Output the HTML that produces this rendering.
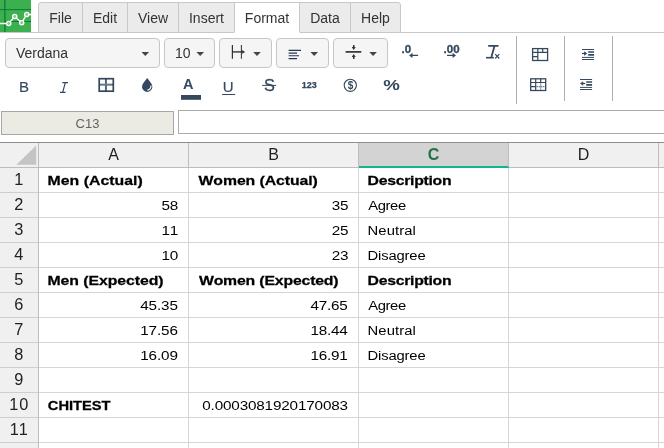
<!DOCTYPE html>
<html>
<head>
<meta charset="utf-8">
<title>Spreadsheet</title>
<style>
*{box-sizing:border-box;margin:0;padding:0}
html,body{width:664px;height:448px;overflow:hidden;background:#fff}
body{font-family:"Liberation Sans",sans-serif;color:#333;position:relative}
#app{position:absolute;left:0;top:0;width:664px;height:448px;overflow:hidden;will-change:transform}
/* tab bar */
#tabline{position:absolute;left:0;top:32px;width:664px;height:1px;background:#c8c8c8}
.tab{position:absolute;top:2px;height:31px;background:#ebebeb;border:1px solid #c8c8c8;font-size:14px;line-height:30px;text-align:center;color:#333;white-space:nowrap}
.tab.first{border-top-left-radius:3px}
.tab.last{border-top-right-radius:3px}
.tab.active{background:#fff;border-bottom-color:#fff;height:31px}
/* dropdowns */
.dd{position:absolute;top:38px;height:30px;background:#f5f5f5;border:1px solid #c6c6c6;border-radius:4px}
.ddtxt{position:absolute;top:0;line-height:29px;font-size:14px;color:#333}
svg{position:absolute;overflow:visible}
.sep{position:absolute;width:1px;background:#a9b1b9}
/* formula bar */
#namebox{position:absolute;left:1px;top:111px;width:173px;height:24px;background:#ebebe3;border:1px solid #a6a6a6;font-size:13px;line-height:23px;text-align:center;color:#636363}
#formula{position:absolute;left:178px;top:110px;width:500px;height:24px;background:#fff;border:1px solid #ababab}
/* grid */
#grid{position:absolute;left:0;top:142px;width:664px;height:306px;border-top:1px solid #8e8e8e;background:#fff}
.ch{position:absolute;top:0;height:25px;background:#f0f0f0;border-right:1px solid #bdbdbd;border-bottom:1px solid #bdbdbd;font-size:16px;line-height:23px;text-align:center;color:#222}
.ch.sel{background:#d3d3d3;border-bottom:2px solid #14b48f;color:#217346;font-weight:bold}
.rh{position:absolute;left:0;width:39px;height:25px;background:#f0f0f0;border-right:1px solid #bdbdbd;border-bottom:1px solid #cfcfcf;font-size:16.3px;letter-spacing:1px;padding-left:.6px;line-height:24px;text-align:center;color:#222}
.rh span{display:inline-block;position:relative;top:-1px}
.vl{position:absolute;top:25px;width:1px;height:290px;background:#d6d6d6}
.hl{position:absolute;left:39px;width:625px;height:1px;background:#d6d6d6}
.c{position:absolute;height:24px;line-height:24px;color:#000;white-space:nowrap;font-kerning:none;transform-origin:0 50%}
.c.b{font-weight:bold;font-size:15.8px;-webkit-text-stroke:.3px #000;transform:translateY(-.25px) scaleY(.846)}
.c.r{font-size:15.25px;transform:translateY(-.35px) scaleY(.875);margin-top:-.25px}
.c.l{font-size:14.8px;transform:translateY(-.5px) scaleY(.90)}
</style>
</head>
<body>
<div id="app">

<!-- logo -->
<svg style="left:0;top:0" width="31" height="32" viewBox="0 0 31 32">
  <rect x="0" y="0" width="31" height="32" fill="#3cb04f"/>
  <rect x="4.2" y="0" width="1.3" height="32" fill="#0e7a38"/>
  <rect x="0" y="9.1" width="31" height="1" fill="#0e7a38"/>
  <rect x="5" y="21" width="26" height="1" fill="#0e7a38"/>
  <polyline points="0,23.5 8.7,23.5 14.7,16.5 21.7,22.7 26.7,14.5 31,14.5" fill="none" stroke="#fff" stroke-width="1.3"/>
  <circle cx="8.7" cy="23.5" r="2.1" fill="#7fcb8b" stroke="#fff" stroke-width="1.3"/>
  <circle cx="14.7" cy="16.5" r="2.1" fill="#7fcb8b" stroke="#fff" stroke-width="1.3"/>
  <circle cx="21.7" cy="22.7" r="2.1" fill="#7fcb8b" stroke="#fff" stroke-width="1.3"/>
  <circle cx="26.7" cy="14.5" r="2.1" fill="#7fcb8b" stroke="#fff" stroke-width="1.3"/>
</svg>

<!-- tabs -->
<div id="tabline"></div>
<div class="tab first" style="left:38px;width:45px">File</div>
<div class="tab" style="left:82px;width:46px">Edit</div>
<div class="tab" style="left:127px;width:52px">View</div>
<div class="tab" style="left:178px;width:57px">Insert</div>
<div class="tab" style="left:299px;width:52px">Data</div>
<div class="tab last" style="left:350px;width:51px">Help</div>
<div class="tab active" style="left:234px;width:66px">Format</div>

<!-- toolbar row 1 -->
<div class="dd" style="left:5px;width:155px"><span class="ddtxt" style="left:10px">Verdana</span></div>
<div class="dd" style="left:164px;width:51px"><span class="ddtxt" style="left:10px">10</span></div>
<div class="dd" style="left:219px;width:53px"></div>
<div class="dd" style="left:276px;width:53px"></div>
<div class="dd" style="left:333px;width:55px"></div>

<!-- separators -->
<div class="sep" style="left:516px;top:36px;height:68px"></div>
<div class="sep" style="left:564px;top:36px;height:65px"></div>
<div class="sep" style="left:612px;top:36px;height:65px"></div>


<!-- toolbar icons (page coordinates) -->
<svg id="icons" style="left:0;top:0" width="664" height="448" viewBox="0 0 664 448">
  <g fill="none" stroke="#333" stroke-width="1.25">
    <!-- column width icon -->
    <path d="M232.4 45v13.8"/><path d="M241.4 45v13.8" stroke-width="1.05"/>
    <path d="M232.4 51.9h10.4" stroke-width="1.4"/>
    <path d="M242.2 50.1l2.9 1.8l-2.9 1.8z" fill="#333" stroke="none"/>
    <!-- vertical middle icon -->
    <path d="M345.6 51.9h15.7" stroke-width="1.7"/>
    <path d="M353.7 45v3.2M353.7 59v-3.2" stroke-width="1.5"/>
    <path d="M351.7 47.1h4l-2 2.9zM351.7 56.9h4l-2-2.9z" fill="#333" stroke="none"/>
  </g>
  <g fill="none" stroke="#253951" stroke-width="1.1">
    <!-- align left icon -->
    <path d="M288.6 50.4h12.4M288.6 53.1h8.4M288.6 55.8h10.4M288.6 58.6h8.4"/>
  </g>
  <g fill="#34495e" stroke="#34495e" stroke-width="0" font-family="Liberation Sans, sans-serif">
    <!-- decimals -->
    <text x="401.6" y="53" font-size="11.5" font-weight="bold" stroke-width="0.35">.0</text>
    <path d="M418.1 54.7h-5.6v-1.9l-3.4 2.6l3.4 2.6v-1.9h5.6z"/>
    <text x="443.6" y="53" font-size="11.5" font-weight="bold" stroke-width="0.35">.00</text>
    <path d="M447 54.7h5.6v-1.9l3.4 2.6l-3.4 2.6v-1.9h-5.6z"/>
    <!-- clear format -->
    <path d="M488.2 45.9h10.3M494.5 45.9l-3.1 11.1" stroke-width="1.8" fill="none"/>
    <rect x="486" y="56.9" width="7.8" height="1.6"/>
    <path d="M495.2 54.2l4.1 4.3M499.3 54.2l-4.1 4.3" stroke-width="1.2" fill="none"/>
    <!-- row 2 -->
    <text x="19" y="92.4" font-size="15" stroke-width="0.15">B</text>
    <path d="M62.4 82.6h5.6M60 92.4h5.6M65.3 82.6l-2.6 9.8" stroke-width="1.2" fill="none"/>
    <text x="182.9" y="89.1" font-size="14" font-weight="bold" textLength="10.5" lengthAdjust="spacingAndGlyphs">A</text>
    <rect x="181" y="95" width="20" height="4.8"/>
    <text x="222.8" y="92.3" font-size="15" stroke-width="0.15">U</text>
    <rect x="222.1" y="94" width="13" height="1"/>
    <text x="263.9" y="90.5" font-size="16.3" stroke-width="0.3">S</text>
    <rect x="262.1" y="84.9" width="14" height="1"/>
    <text x="301.7" y="88.1" font-size="9" font-weight="bold" stroke-width="0.25">123</text>
    <text x="383.2" y="90" font-size="14.5" font-weight="bold" textLength="16.6" lengthAdjust="spacingAndGlyphs">%</text>
    <text x="347.7" y="88.8" font-size="10" font-weight="bold">$</text>
  </g>
  <g fill="none" stroke="#34495e">
    <!-- currency circle -->
    <circle cx="350.3" cy="85.3" r="6.1" stroke-width="1.1"/>
    <!-- borders icon -->
    <rect x="99.2" y="78.7" width="14.1" height="12.5" stroke-width="1.7"/>
    <path d="M105.9 78.7v12.5M99.2 84.6h14.1" stroke-width="1.9"/>
    <path d="M105.9 80v10M100.4 84.6h11.6" stroke="#93a0ad" stroke-width="0.6"/>
    <!-- table icon 1 -->
    <rect x="532.6" y="48.6" width="15" height="11.9" stroke-width="1.3"/>
    <path d="M537.8 48.6v11.9M532.6 52.3h15M532.6 56.6h5.2M542.7 48.6v3.7" stroke-width="1.2"/>
    <!-- table icon 2 -->
    <rect x="530.7" y="78.8" width="15" height="11.7" stroke-width="1.3"/>
    <path d="M535.7 78.8v11.7M530.7 82.5h15M530.7 86.6h5M540.7 78.8v3.7" stroke-width="1.2"/>
    <path d="M540.7 83.5v7M536.7 86.6h9" stroke-width="1.1" stroke-dasharray="1 1"/>
    <!-- indent icons -->
    <path d="M582 49.5h12.1M582 57.4h12.1M582 59.5h12.1" stroke-width="1"/>
    <path d="M588.2 52h5.9M588.2 54.9h5.9" stroke-width="1.7"/>
    <path d="M582 53.5h3" stroke-width="1.2"/>
    <path d="M584.1 51.3l3.2 2.2l-3.2 2.2z" fill="#34495e" stroke="none"/>
    <path d="M580 79.5h12.1M580 87.4h12.1M580 89.5h12.1" stroke-width="1"/>
    <path d="M586.2 82h5.9M586.2 84.9h5.9" stroke-width="1.7"/>
    <path d="M582.5 83.5h2.8" stroke-width="1.2"/>
    <path d="M583.2 81.3l-3.2 2.2l3.2 2.2z" fill="#34495e" stroke="none"/>
  </g>
  <g fill="#444"><path d="M141.5 52h7.6l-3.8 4.1z"/><path d="M196.4 52h7.6l-3.8 4.1z"/><path d="M253.2 52h7.6l-3.8 4.1z"/><path d="M310.4 52h7.6l-3.8 4.1z"/><path d="M369.3 52h7.6l-3.8 4.1z"/></g>
  <!-- fill drop -->
  <path d="M147.2 78c2.2 2.9 5.2 6 5.2 8.7a5.2 5.2 0 0 1-10.4 0c0-2.7 3-5.8 5.2-8.7z" fill="#34495e"/>
  <path d="M150.8 85.5a3.7 3.7 0 0 1-3.5 4.6" fill="none" stroke="#fff" stroke-width="1.2"/>
</svg>

<!-- formula bar -->
<div id="namebox">C13</div>
<div id="formula"></div>

<!-- grid -->
<div id="grid">
  <div class="ch" style="left:0;width:39px"></div>
  <svg style="left:16px;top:2px" width="21" height="21" viewBox="0 0 21 21"><polygon points="20.2,0.5 20.2,19.8 0.4,19.8" fill="#c4c4c4"/></svg>
  <div class="ch" style="left:39px;width:150px">A</div>
  <div class="ch" style="left:189px;width:170px">B</div>
  <div class="ch sel" style="left:359px;width:150px">C</div>
  <div class="ch" style="left:509px;width:150px">D</div>
  <div class="ch" style="left:659px;width:150px"></div>
  <div class="rh" style="top:25px"><span>1</span></div>
  <div class="rh" style="top:50px"><span>2</span></div>
  <div class="rh" style="top:75px"><span>3</span></div>
  <div class="rh" style="top:100px"><span>4</span></div>
  <div class="rh" style="top:125px"><span>5</span></div>
  <div class="rh" style="top:150px"><span>6</span></div>
  <div class="rh" style="top:175px"><span>7</span></div>
  <div class="rh" style="top:200px"><span>8</span></div>
  <div class="rh" style="top:225px"><span>9</span></div>
  <div class="rh" style="top:250px"><span>10</span></div>
  <div class="rh" style="top:275px"><span>11</span></div>
  <div class="rh" style="top:300px"><span>12</span></div>
  <div class="hl" style="top:49px"></div>
  <div class="hl" style="top:74px"></div>
  <div class="hl" style="top:99px"></div>
  <div class="hl" style="top:124px"></div>
  <div class="hl" style="top:149px"></div>
  <div class="hl" style="top:174px"></div>
  <div class="hl" style="top:199px"></div>
  <div class="hl" style="top:224px"></div>
  <div class="hl" style="top:249px"></div>
  <div class="hl" style="top:274px"></div>
  <div class="hl" style="top:299px"></div>
  <div class="hl" style="top:324px"></div>
  <div class="vl" style="left:188px"></div>
  <div class="vl" style="left:358px"></div>
  <div class="vl" style="left:508px"></div>
  <div class="vl" style="left:658px"></div>
<!--cells-->
  <div class="c b" style="left:47.56px;top:26.2px;letter-spacing:0.032px">Men (Actual)</div>
  <div class="c b" style="left:198.50px;top:26.2px;letter-spacing:-0.074px">Women (Actual)</div>
  <div class="c b" style="left:367.50px;top:26.2px;letter-spacing:-0.277px">Description</div>
  <div class="c r" style="left:161.39px;top:51.2px;letter-spacing:-0.050px">58</div>
  <div class="c r" style="left:331.69px;top:51.2px;letter-spacing:-0.050px">35</div>
  <div class="c l" style="left:368.20px;top:51.2px;letter-spacing:-0.368px">Agree</div>
  <div class="c r" style="left:161.39px;top:76.2px;letter-spacing:-0.050px">11</div>
  <div class="c r" style="left:331.69px;top:76.2px;letter-spacing:-0.050px">25</div>
  <div class="c l" style="left:367.50px;top:76.2px;letter-spacing:0.116px">Neutral</div>
  <div class="c r" style="left:161.39px;top:101.2px;letter-spacing:-0.050px">10</div>
  <div class="c r" style="left:331.69px;top:101.2px;letter-spacing:-0.050px">23</div>
  <div class="c l" style="left:367.50px;top:101.2px;letter-spacing:-0.151px">Disagree</div>
  <div class="c b" style="left:47.50px;top:126.2px;letter-spacing:-0.054px">Men (Expected)</div>
  <div class="c b" style="left:198.90px;top:126.2px;letter-spacing:-0.166px">Women (Expected)</div>
  <div class="c b" style="left:367.50px;top:126.2px;letter-spacing:-0.277px">Description</div>
  <div class="c r" style="left:140.19px;top:151.2px;letter-spacing:-0.112px">45.35</div>
  <div class="c r" style="left:310.49px;top:151.2px;letter-spacing:-0.213px">47.65</div>
  <div class="c l" style="left:368.20px;top:151.2px;letter-spacing:-0.368px">Agree</div>
  <div class="c r" style="left:140.19px;top:176.2px;letter-spacing:-0.112px">17.56</div>
  <div class="c r" style="left:310.49px;top:176.2px;letter-spacing:-0.213px">18.44</div>
  <div class="c l" style="left:367.50px;top:176.2px;letter-spacing:0.116px">Neutral</div>
  <div class="c r" style="left:140.19px;top:201.2px;letter-spacing:-0.112px">16.09</div>
  <div class="c r" style="left:310.49px;top:201.2px;letter-spacing:-0.213px">16.91</div>
  <div class="c l" style="left:367.50px;top:201.2px;letter-spacing:-0.151px">Disagree</div>
  <div class="c b" style="left:47.85px;top:251.2px;letter-spacing:-0.013px;font-size:14.7px;transform:translateY(-.25px) scaleY(.91)">CHITEST</div>
  <div class="c r" style="left:202.25px;top:251.2px;letter-spacing:-0.156px">0.0003081920170083</div>
<!--/cells-->
</div>

</div>
</body>
</html>
